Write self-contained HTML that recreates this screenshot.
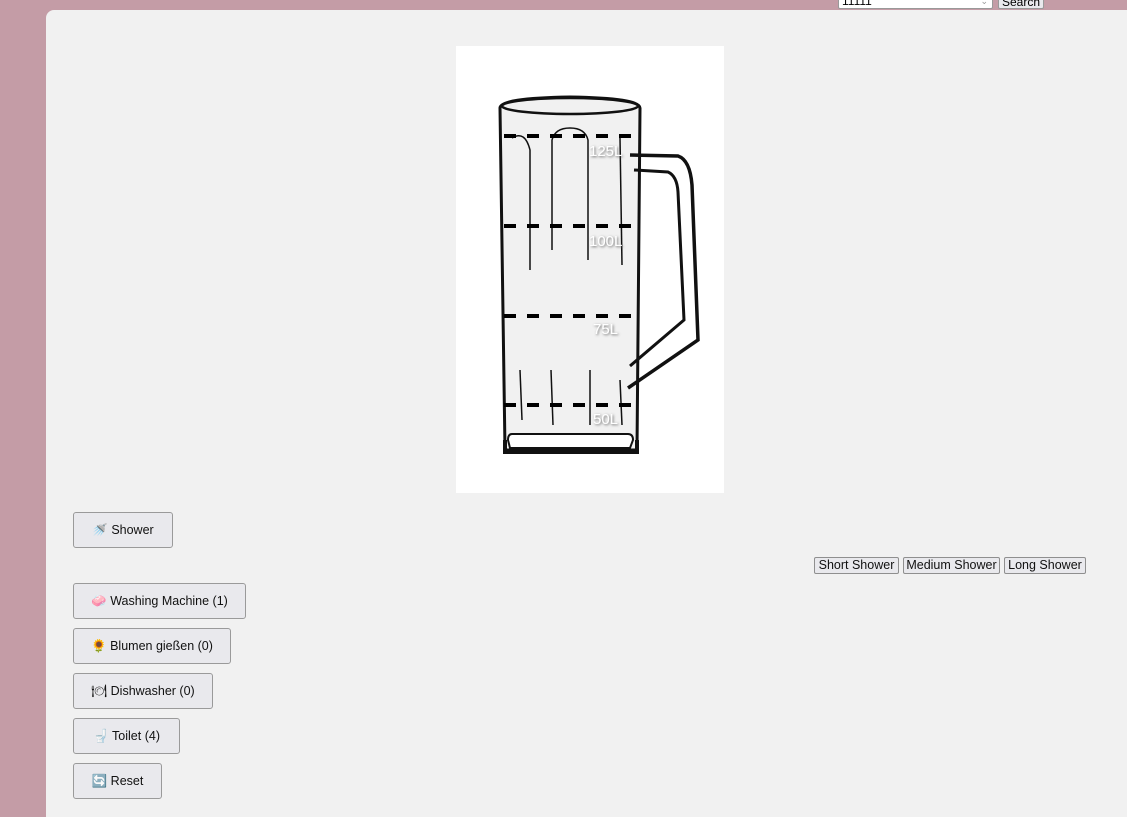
<!DOCTYPE html>
<html><head><style>
html,body{margin:0;width:1127px;height:817px;overflow:hidden}
body{background:#c49ca6;font-family:"Liberation Sans","DejaVu Sans",sans-serif;position:relative}
.card{position:absolute;left:46px;top:10px;width:1100px;height:820px;background:#f1f1f1;border-radius:8px}
.img{position:absolute;left:456px;top:46px;width:268px;height:447px;background:#fff}
.btn{position:absolute;left:73px;height:36px;border:1px solid #9a9a9a;border-radius:3px;background:#e9e9ed;font-size:12.5px;color:#111;display:flex;align-items:center;justify-content:center;box-sizing:border-box}
.sb{position:absolute;top:557px;height:17px;border:1px solid #8f8f8f;border-radius:2px;background:#e9e9ed;font-size:12.5px;line-height:15px;text-align:center;white-space:nowrap;box-sizing:border-box;color:#111}
.lbl{font:15px "Liberation Sans",sans-serif;fill:#fff;filter:url(#sh)}
</style></head><body>
<div style="position:absolute;left:838px;top:-6px;width:155px;height:15px;background:#fff;border:1px solid #999;border-radius:2px;font-size:12px;line-height:12px;padding-left:3px;box-sizing:border-box">11111<span style="position:absolute;right:4px;color:#999;font-size:9px">⌄</span></div>
<div style="position:absolute;left:998px;top:-6px;width:46px;height:15px;background:#e9e9ed;border:1px solid #999;border-radius:2px;font-size:12px;line-height:15px;text-align:center;box-sizing:border-box">Search</div>
<div class="card"></div>
<div class="img"></div>
<svg style="position:absolute;left:0;top:0" width="1127" height="817">
<defs><filter id="sh" x="-20%" y="-20%" width="150%" height="150%"><feDropShadow dx="1" dy="1" stdDeviation="1.2" flood-color="#555" flood-opacity="0.9"/></filter></defs>
<g fill="none" stroke="#111" stroke-width="3">
<path d="M500 108 Q500 98 570 97 Q640 98 640 108 L637 450 L505 450 Z" fill="#f1f1f1"/>
<ellipse cx="570" cy="106" rx="68" ry="8" fill="#f1f1f1" stroke-width="2.5"/>
<path d="M630 155 L678 156 Q690 160 692 185 L698 340 L628 388" stroke-width="3.5"/>
<path d="M634 170 L668 172 Q677 176 678 192 L684 320 L630 366" stroke-width="3"/>
<path d="M512 434 L628 434 Q633 434 633 440 L630 448 L510 448 L508 440 Q508 434 512 434Z" fill="#fff" stroke-width="2"/>
<path d="M505 440 L505 452 L637 452 L637 440" stroke-width="4"/>
<g stroke-width="1.5"><path d="M512 138 Q525 130 530 150 L530 270"/><path d="M552 250 L552 140 Q555 128 570 128 Q585 128 588 140 L588 260"/><path d="M620 138 L622 265"/><path d="M520 370 L522 420"/><path d="M551 370 L553 425"/><path d="M590 370 L590 425"/><path d="M620 380 L622 425"/></g>
</g>
<g stroke="#000" stroke-width="4" stroke-dasharray="12 11">
<path d="M504 136 H636"/><path d="M504 226 H636"/><path d="M504 316 H636"/><path d="M504 405 H636"/>
</g>
<text class="lbl" x="589" y="156">125L</text>
<text class="lbl" x="589" y="246">100L</text>
<text class="lbl" x="593" y="334">75L</text>
<text class="lbl" x="593" y="424">50L</text>
</svg>
<div class="btn" style="top:512px;width:100px">🚿&nbsp;Shower</div>
<div class="sb" style="left:814px;width:85px">Short Shower</div>
<div class="sb" style="left:903px;width:97px">Medium Shower</div>
<div class="sb" style="left:1004px;width:82px">Long Shower</div>
<div class="btn" style="top:583px;width:173px">🧼&nbsp;Washing Machine (1)</div>
<div class="btn" style="top:628px;width:158px">🌻&nbsp;Blumen gießen (0)</div>
<div class="btn" style="top:673px;width:140px">🍽&nbsp;Dishwasher (0)</div>
<div class="btn" style="top:718px;width:107px">🚽&nbsp;Toilet (4)</div>
<div class="btn" style="top:763px;width:89px">🔄&nbsp;Reset</div>
</body></html>
